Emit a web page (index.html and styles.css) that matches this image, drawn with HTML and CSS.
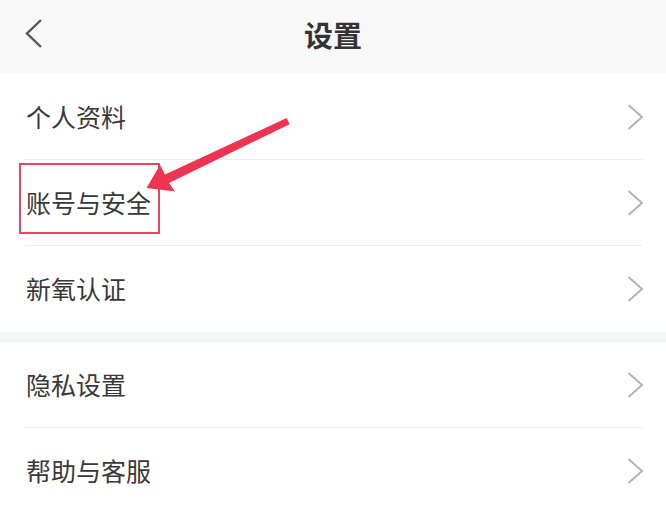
FILE: index.html
```html
<!DOCTYPE html>
<html lang="zh-CN">
<head>
<meta charset="utf-8">
<title>设置</title>
<link rel="stylesheet" href="styles.css">
</head>
<body>
<div class="page">
  <header class="header">
    <div class="back">
      <svg width="18" height="30" viewBox="0 0 18 30"><polyline points="16,1 2,14.5 16,28" fill="none" stroke="#555" stroke-width="2.4" stroke-linejoin="miter"/></svg>
    </div>
    <h1 class="title">设置</h1>
    <div></div>
  </header>
  <section class="group">
    <div class="row"><span class="label">个人资料</span><svg class="chev" width="17" height="26" viewBox="0 0 17 26"><polyline points="1.5,1 15,13 1.5,25" fill="none" stroke="#b3b3b3" stroke-width="2"/></svg></div>
    <div class="row"><span class="label">账号与安全</span><svg class="chev" width="17" height="26" viewBox="0 0 17 26"><polyline points="1.5,1 15,13 1.5,25" fill="none" stroke="#b3b3b3" stroke-width="2"/></svg></div>
    <div class="row"><span class="label">新氧认证</span><svg class="chev" width="17" height="26" viewBox="0 0 17 26"><polyline points="1.5,1 15,13 1.5,25" fill="none" stroke="#b3b3b3" stroke-width="2"/></svg></div>
  </section>
  <div class="band"></div>
  <section class="group">
    <div class="row"><span class="label">隐私设置</span><svg class="chev" width="17" height="26" viewBox="0 0 17 26"><polyline points="1.5,1 15,13 1.5,25" fill="none" stroke="#b3b3b3" stroke-width="2"/></svg></div>
    <div class="row"><span class="label">帮助与客服</span><svg class="chev" width="17" height="26" viewBox="0 0 17 26"><polyline points="1.5,1 15,13 1.5,25" fill="none" stroke="#b3b3b3" stroke-width="2"/></svg></div>
  </section>
  <div class="highlight"></div>
  <svg class="arrow" width="666" height="514" viewBox="0 0 666 514">
    <polygon points="286.6,118 289.6,124.2 169,183 175,191.5 146.5,188 160,165 165,174.5" fill="#ef3452"/>
  </svg>
</div>
</body>
</html>
```
FILE: styles.css
```css
* { box-sizing: border-box; }
html, body { margin: 0; padding: 0; }
body {
  background: #ffffff;
  font-family: "Noto Sans CJK SC", "Noto Sans", sans-serif;
  color: #333333;
}
.page {
  position: relative;
  width: 666px;
  height: 514px;
  overflow: hidden;
  background: #ffffff;
}
.header {
  height: 74px;
  background: #f8f8f8;
  display: grid;
  grid-template-columns: 1fr auto 1fr;
  align-items: center;
}
.back {
  padding-left: 25px;
  padding-bottom: 6px;
  display: flex;
  align-items: center;
}
.back svg { display: block; }
.title {
  margin: 0 0 6px 0;
  font-size: 29px;
  font-weight: 700;
  color: #333333;
  line-height: 1;
  letter-spacing: 0;
}
.group { background: #ffffff; }
.row {
  height: 86px;
  margin: 0 23px 0 25px;
  border-bottom: 1px solid #ededed;
  display: flex;
  align-items: center;
  justify-content: space-between;
}
.row:last-child { border-bottom: none; }
.label {
  padding-left: 1px;
  font-size: 25px;
  line-height: 1;
  color: #383838;
  margin-top: -1px;
}
.chev { display: block; margin-right: -1px; }
.band {
  height: 10px;
  background: #f2f6f6;
}
.highlight {
  position: absolute;
  left: 19px;
  top: 163px;
  width: 141px;
  height: 71px;
  border: 2px solid #e6455d;
}
.arrow {
  position: absolute;
  left: 0;
  top: 0;
  pointer-events: none;
}
```
